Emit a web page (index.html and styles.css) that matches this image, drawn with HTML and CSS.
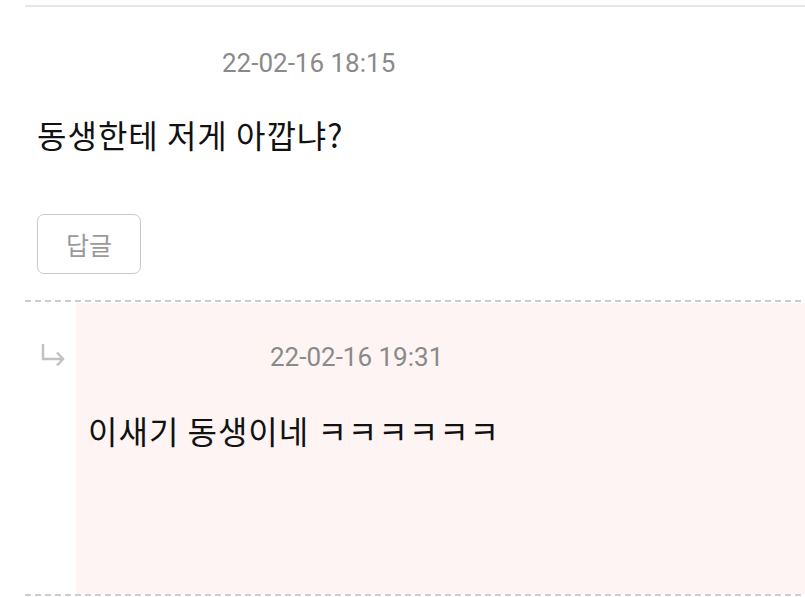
FILE: index.html
```html
<!DOCTYPE html>
<html>
<head>
  <meta charset="utf-8">
  <title>댓글</title>
  <link rel="stylesheet" href="styles.css">
</head>
<body>
  <div class="thread">
    <div class="comment">
      <div class="meta">
        <span class="date">22-02-16 18:15</span>
      </div>
      <p class="text">동생한테 저게 아깝냐?</p>
      <button class="reply-btn" type="button">답글</button>
    </div>
    <div class="divider"></div>

    <div class="reply">
      <div class="reply-icon">
        <svg width="28" height="26" viewBox="0 0 28 26">
          <path d="M3 0 V15 H23 M17 8.5 L23 15 L17 21.5" fill="none" stroke="#c2c2c2" stroke-width="2.5"/>
        </svg>
      </div>
      <div class="reply-body">
        <div class="meta reply-meta">
          <span class="date">22-02-16 19:31</span>
        </div>
        <p class="text">이새기 동생이네 ㅋㅋㅋㅋㅋㅋ</p>
      </div>
    </div>
    <div class="divider"></div>
  </div>
</body>
</html>
```

FILE: styles.css
```css
body {
  margin: 0;
  background: #ffffff;
  font-family: Roboto, "Noto Sans CJK KR", sans-serif;
  color: #111111;
}

.thread {
  margin: 5px 0 0 25px;
  border-top: 2px solid #e6e6e6;
}

.comment {
  padding: 0 0 26px 12px;
}

.divider {
  height: 2px;
  background: repeating-linear-gradient(to right, #cdcdcd 0 6px, transparent 6px 10px);
}

.meta {
  padding-left: 185px;
  margin-top: 41px;
  height: 30px;
  line-height: 30px;
}

.date {
  font-family: Roboto, sans-serif;
  font-size: 26px;
  color: #8a8a8a;
}

.text {
  margin: 36px 0 0;
  font-family: "Noto Sans CJK KR", sans-serif;
  font-size: 32px;
  letter-spacing: 1px;
  line-height: 40px;
  color: #111111;
}

.reply-btn {
  display: block;
  margin-top: 60px;
  width: 104px;
  height: 60px;
  background: #ffffff;
  border: 1.5px solid #c9c9c9;
  border-radius: 7px;
  font-family: "Noto Sans CJK KR", sans-serif;
  font-size: 25px;
  color: #9a9a9a;
  padding: 0;
}

.reply {
  display: flex;
}

.reply-icon {
  width: 51px;
  padding: 42px 0 0 15px;
  box-sizing: border-box;
}

.reply-body {
  flex: 1;
  margin-top: 1px;
  height: 291px;
  background: #fdf4f3;
  padding-left: 12px;
}

.reply-meta {
  padding-left: 182px;
  margin-top: 39px;
}

.reply-body .text {
  margin-top: 38px;
}
```
